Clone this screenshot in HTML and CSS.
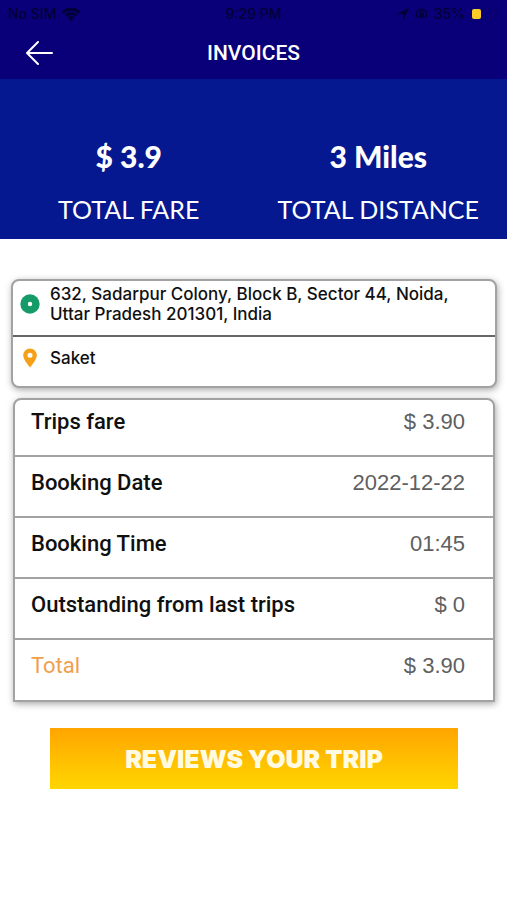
FILE: index.html
```html
<!DOCTYPE html>
<html lang="en">
<head>
<meta charset="utf-8">
<meta name="viewport" content="width=device-width, initial-scale=1">
<title>Invoices</title>
<link rel="stylesheet" href="styles.css">
</head>
<body>
<header class="top">
  <div class="status">
    <div class="status-side">
      <span>No SIM</span>
      <svg width="18" height="14" viewBox="0 0 18 14" aria-hidden="true"><path d="M0 4.500a13 13 0 0 1 18 0L16.300 6.300a10.500 10.500 0 0 0-14.600 0zM3 7.600a8.600 8.600 0 0 1 12 0l-1.700 1.800a6.200 6.200 0 0 0-8.600 0zM6 10.600a4.300 4.300 0 0 1 6 0L9 13.700z" fill="currentColor" stroke="currentColor" stroke-width=".5"/></svg>
    </div>
    <span>9:29 PM</span>
    <div class="status-side status-right">
      <svg width="12" height="12" viewBox="0 0 12 12" aria-hidden="true"><path d="M11.500.5 6.500 11.500V5.800H.8z" fill="currentColor" stroke="currentColor" stroke-width=".6"/></svg>
      <svg width="13" height="12" viewBox="0 0 13 12" fill="none" stroke="currentColor" aria-hidden="true"><path d="M2.500 9.500a5 5 0 1 1 8 0" stroke-width="1.500"/><rect x="4.500" y="5.500" width="4" height="4" fill="currentColor"/><path d="M5 5V4a1.500 1.500 0 0 1 3 0v1"/></svg>
      <span>35%</span>
      <svg width="28" height="12" viewBox="0 0 28 12" aria-hidden="true"><rect x=".5" y=".5" width="23" height="11" rx="3" fill="none" stroke="#07006c"/><rect x="1" y="1" width="9" height="10" rx="2" fill="#f9cc28"/><path d="M26 4v4" stroke="#07006c" stroke-width="2"/></svg>
    </div>
  </div>
  <div class="bar">
    <button class="back" type="button" aria-label="Back">
      <svg width="28" height="24" viewBox="0 0 28 24" fill="none" stroke="currentColor" stroke-width="2" stroke-linecap="round" stroke-linejoin="round" aria-hidden="true"><path d="M12 1 1 12l11 11M1 12h25"/></svg>
    </button>
    <h1 class="title">INVOICES</h1>
  </div>
</header>
<section class="summary">
  <div class="stat"><strong>$ 3.9</strong><span>TOTAL FARE</span></div>
  <div class="stat"><strong>3 Miles</strong><span>TOTAL DISTANCE</span></div>
</section>
<main class="content">
  <section class="card route">
    <div class="stop">
      <svg width="20" height="20" viewBox="0 0 20 20" aria-hidden="true"><circle cx="10" cy="10" r="9.700" fill="#159b68"/><circle cx="10" cy="10" r="2.200" fill="#fff"/></svg>
      <p>632, Sadarpur Colony, Block B, Sector 44, Noida, Uttar Pradesh 201301, India</p>
    </div>
    <div class="stop">
      <svg width="20" height="20" viewBox="0 0 20 20" aria-hidden="true"><path d="M10 .5a6.800 6.800 0 0 0-6.800 6.800C3.200 12 10 19.500 10 19.500s6.800-7.500 6.800-12.200A6.800 6.800 0 0 0 10 .5z" fill="#f5a016"/><circle cx="10" cy="7.200" r="2.500" fill="#fff"/></svg>
      <p>Saket</p>
    </div>
  </section>
  <table class="card fares">
    <tbody>
      <tr><th scope="row">Trips fare</th><td>$ 3.90</td></tr>
      <tr><th scope="row">Booking Date</th><td>2022-12-22</td></tr>
      <tr><th scope="row">Booking Time</th><td>01:45</td></tr>
      <tr><th scope="row">Outstanding from last trips</th><td>$ 0</td></tr>
      <tr class="total"><th scope="row">Total</th><td>$ 3.90</td></tr>
    </tbody>
  </table>
  <button class="review" type="button">REVIEWS YOUR TRIP</button>
</main>
</body>
</html>
```
FILE: styles.css
```css
* {
  box-sizing: border-box;
}

body {
  margin: 0;
  background: #fff;
  color: #101010;
  font-family: "Liberation Sans", sans-serif;
}

.top {
  background: #090079;
  color: #fff;
}

.status {
  display: grid;
  grid-template-columns: 1fr auto 1fr;
  align-items: center;
  height: 27px;
  padding: 0 8px;
  color: #030035;
  font: 500 14px/27px Inter, sans-serif;
}

.status-side {
  display: flex;
  align-items: center;
  gap: 6px;
}

.status-right {
  justify-content: flex-end;
}

.bar {
  display: grid;
  grid-template-columns: 56px 1fr 56px;
  align-items: center;
  height: 52px;
}

.back {
  display: flex;
  justify-content: flex-end;
  padding: 0 2px 0 0;
  border: 0;
  background: none;
  color: #fff;
}

.title {
  margin: 0;
  text-align: center;
  font: 500 21px/24px Roboto, sans-serif;
}

.summary {
  display: grid;
  grid-template-columns: 1fr 1fr;
  padding: 60px 4px 12px;
  background: #05188f;
  color: #fff;
  font-family: Lato, sans-serif;
}

.stat {
  display: flex;
  flex-direction: column;
  align-items: center;
  gap: 18px;
  font-size: 25px;
  line-height: 35px;
}

.stat strong {
  font-size: 30px;
  font-weight: 900;
}

.content {
  display: flex;
  flex-direction: column;
  padding: 40px 10px 24px 11px;
}

.card {
  border: 2px solid #a2a2a2;
  border-radius: 8px;
  background: #fff;
  box-shadow: 1px 2px 7px rgba(0, 0, 0, 0.35);
}

.stop {
  display: grid;
  grid-template-columns: 20px 1fr;
  align-items: center;
  gap: 10px;
  height: 54px;
  padding: 0 7px 8px;
  font: 500 17px/20px Inter, sans-serif;
}

.stop + .stop {
  height: 51px;
  padding-bottom: 7px;
  border-top: 2px solid #666;
}

.stop p {
  margin: 0;
}

.fares {
  margin: 10px 2px 0;
  border-collapse: separate;
  border-spacing: 0;
  border-radius: 8px 8px 0 0;
}

.fares th,
.fares td {
  height: 61px;
  padding: 0 28px 8px 16px;
  border-bottom: 2px solid #a2a2a2;
  font-size: 22px;
  line-height: 28px;
  white-space: nowrap;
}

.fares th {
  padding-right: 0;
  font-family: Roboto, sans-serif;
  font-weight: 500;
  text-align: left;
}

.fares td {
  color: #606060;
  text-align: right;
}

.fares tr:first-child > * {
  height: 57px;
  padding-bottom: 12px;
}

.fares .total > * {
  height: 60px;
  border-bottom: 0;
}

.fares .total th {
  color: #f0a04c;
  font-weight: 400;
}

.review {
  height: 61px;
  margin: 26px 39px 0;
  padding: 0;
  border: 0;
  background: linear-gradient(#ffa500, #ffd600);
  color: #fffbe2;
  font: 900 25px/32px Inter, sans-serif;
}
```
